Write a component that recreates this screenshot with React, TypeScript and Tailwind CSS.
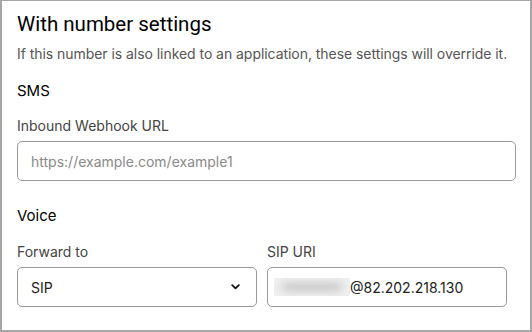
import React from "react";

export default function App() {
  return (
    <div
      className="w-[532px] h-[332px] bg-white border-2 border-t border-[#a6a6a6] box-border pl-[15px] pr-[14px] pt-[9px] text-[#1a1a1a]"
      style={{ fontFamily: "Inter, 'Noto Sans', sans-serif" }}
    >
      <h2
        className="text-[20.5px] leading-[28px] text-black"
        style={{ fontFamily: "Roboto, Inter, sans-serif" }}
      >
        With number settings
      </h2>
      <p className="mt-[6px] text-[14px] leading-[20px] text-[#555] tracking-[-0.05px]">
        If this number is also linked to an application, these settings will override it.
      </p>
      <h3 className="mt-[17px] text-[15px] leading-[20px] text-black">SMS</h3>
      <label className="block mt-[15px] text-[14px] leading-[20px] text-[#444]">Inbound Webhook URL</label>
      <div className="mt-[5px] h-[40px] w-[499px] border border-[#9a9a9a] rounded-[5px] flex items-center px-[13px]">
        <span className="text-[14px] text-[#8a8a8a]">https://example.com/example1</span>
      </div>
      <h3 className="mt-[25px] text-[15px] leading-[20px] text-black">Voice</h3>
      <div className="mt-[16px] flex gap-[10px]">
        <div className="w-[240px]">
          <div className="text-[14px] leading-[20px] text-[#444]">Forward to</div>
          <div className="mt-[5px] h-[40px] border border-[#9a9a9a] rounded-[5px] flex items-center justify-between pl-[13px] pr-[16px]">
            <span className="text-[14px] text-[#222]">SIP</span>
            <svg width="9" height="6" viewBox="0 0 9 6" fill="none">
              <path d="M1.2 1.2 L4.5 4.3 L7.8 1.2" stroke="#111" strokeWidth="1.8" strokeLinecap="round" strokeLinejoin="round" />
            </svg>
          </div>
        </div>
        <div className="w-[240px]">
          <div className="text-[14px] leading-[20px] text-[#444]">SIP URI</div>
          <div className="mt-[5px] h-[40px] border border-[#9a9a9a] rounded-[5px] flex items-center pl-[6px]">
            <span className="relative w-[76px] h-[18px] bg-[#f0f0f0] overflow-hidden flex items-center justify-center">
              <span className="block w-[60px] h-[8px] rounded-full bg-[#c4c4c4] blur-[4px]" />
            </span>
            <span className="text-[14px] text-[#222]">@82.202.218.130</span>
          </div>
        </div>
      </div>
    </div>
  );
}
